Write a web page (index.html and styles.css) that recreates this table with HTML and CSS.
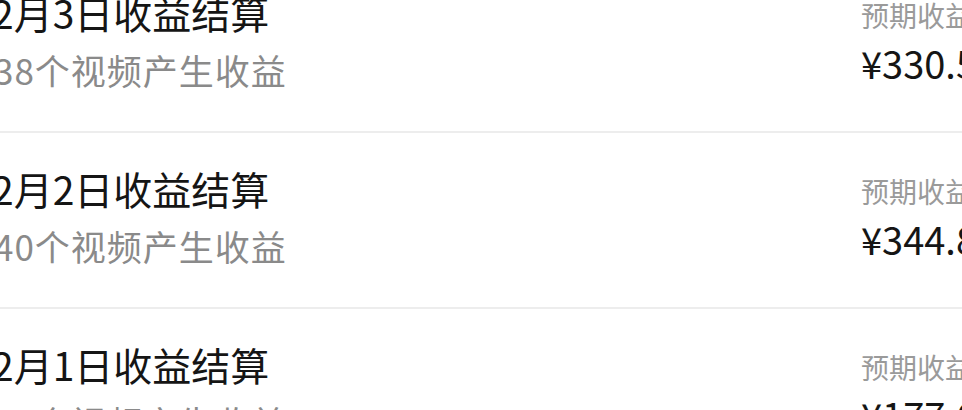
FILE: index.html
```html
<!DOCTYPE html>
<html lang="zh-CN">
<head>
<meta charset="utf-8">
<title>收益结算</title>
<link rel="stylesheet" href="styles.css">
</head>
<body>
<div class="list">
  <div class="row row-first">
    <div class="info">
      <div class="title">2月3日收益结算</div>
      <div class="sub">38个视频产生收益</div>
    </div>
    <div class="money">
      <div class="label">预期收益</div>
      <div class="amount">¥330.52</div>
    </div>
  </div>
  <div class="row">
    <div class="info">
      <div class="title">2月2日收益结算</div>
      <div class="sub">40个视频产生收益</div>
    </div>
    <div class="money">
      <div class="label">预期收益</div>
      <div class="amount">¥344.81</div>
    </div>
  </div>
  <div class="row">
    <div class="info">
      <div class="title">2月1日收益结算</div>
      <div class="sub">35个视频产生收益</div>
    </div>
    <div class="money">
      <div class="label">预期收益</div>
      <div class="amount">¥177.60</div>
    </div>
  </div>
</div>
</body>
</html>
```
FILE: styles.css
```css
html, body {
  margin: 0;
  padding: 0;
  background: #ffffff;
  overflow: hidden;
}

body {
  width: 962px;
  height: 410px;
  font-family: "Noto Sans CJK SC", "Noto Sans", sans-serif;
}

.list {
  width: 1028px;
  margin-left: -8px;
  margin-top: -45px;
}

.row {
  display: flex;
  justify-content: space-between;
  padding: 31px 0 36px;
  border-top: 1px solid #ececec;
}

.row + .row {
  border-top: 2px solid #ededed;
  padding-top: 30px;
}

.info {
  display: flex;
  flex-direction: column;
  gap: 8px;
}

.title {
  font-size: 39px;
  line-height: 50px;
  color: #151515;
}

.sub {
  font-size: 35px;
  line-height: 50px;
  letter-spacing: 1px;
  padding-left: 2px;
  color: #8a8a8a;
}

.money {
  width: 159px;
  display: flex;
  flex-direction: column;
  align-items: flex-start;
  gap: 6px;
  padding-top: 8px;
}

.label {
  font-size: 28px;
  line-height: 40px;
  color: #9a9a9a;
}

.amount {
  font-size: 38px;
  line-height: 44px;
  color: #151515;
}
```
